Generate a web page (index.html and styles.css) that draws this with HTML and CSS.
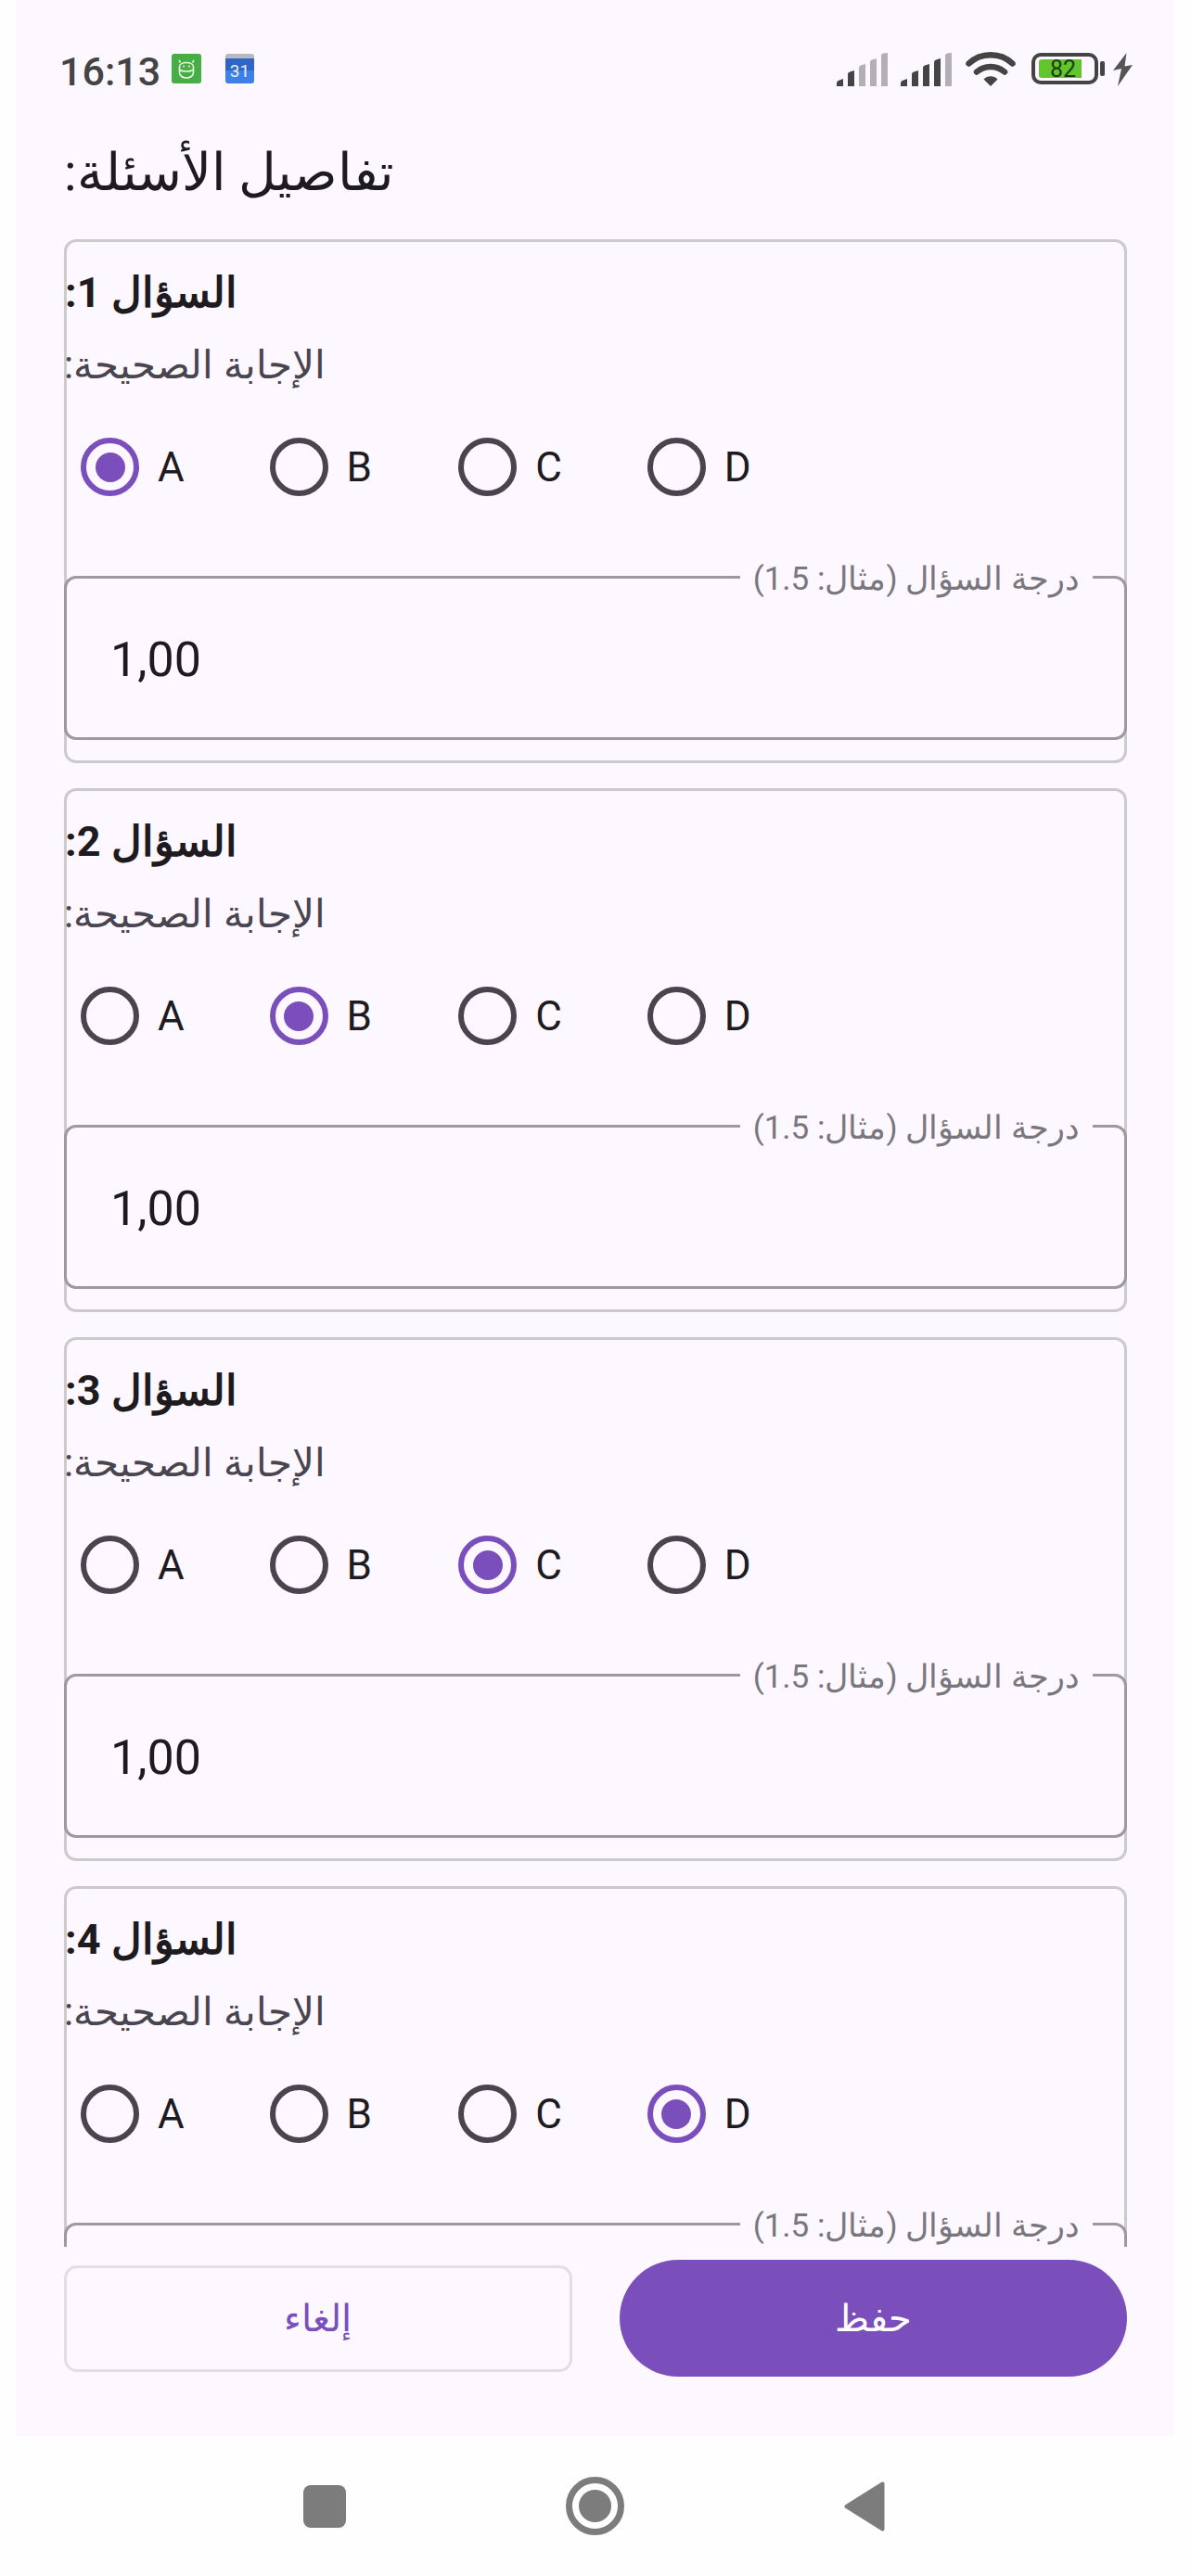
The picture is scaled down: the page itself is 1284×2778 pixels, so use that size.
FILE: index.html
```html
<!DOCTYPE html>
<html lang="ar">
<head>
<meta charset="utf-8">
<title>تفاصيل الأسئلة</title>
<link rel="stylesheet" href="styles.css">
</head>
<body>
<main class="frame">
  <header class="status">
    <div class="status-left">
      <span class="time">16:13</span>
      <svg class="app-icon" viewBox="0 0 32 32" width="32" height="32"><rect width="32" height="32" rx="3" fill="#47ae45"/><g fill="none" stroke="#e9f7e4" stroke-width="1.6"><path d="M9.5 9.5 8 7M22.5 9.5 24 7"/><path d="M8.5 14c0-6 15-6 15 0v6c0 8-15 8-15 0z"/><path d="M8.5 17.5c4 2 11 2 15 0"/></g><circle cx="13" cy="13.5" r="1" fill="#e9f7e4"/><circle cx="19" cy="13.5" r="1" fill="#e9f7e4"/></svg>
      <span class="calendar"><span class="calendar-num">31</span></span>
    </div>
    <div class="status-right">
      <svg class="signal" viewBox="0 0 55 36" width="55" height="36"><g fill="#444"><path d="M0 36v-3q0-3 3-3.600l4-1.400v8z"/><path d="M12 36V23q0-2 2-2.500l5-1.500V36z"/></g><g fill="#b3b0b5"><path d="M24 36V16q0-2 2-2.500l5-1.500V36z"/><path d="M36 36V10q0-2 2-2.500l5-1.500V36z"/><path d="M48 36V3q0-2 2-2.500L55 0V36z"/></g></svg>
      <svg class="signal signal-second" viewBox="0 0 55 36" width="55" height="36"><g fill="#444"><path d="M0 36v-3q0-3 3-3.600l4-1.400v8z"/><path d="M12 36V23q0-2 2-2.500l5-1.500V36z"/><path d="M24 36V16q0-2 2-2.500l5-1.500V36z"/><path d="M36 36V10q0-2 2-2.500l5-1.500V36z"/></g><path fill="#b3b0b5" d="M48 36V3q0-2 2-2.500L55 0V36z"/></svg>
      <svg class="wifi" viewBox="0 0 54 38" width="54" height="38"><g fill="none" stroke="#444" stroke-width="6.500" stroke-linecap="round"><path d="M3.500 13.500C16 1 38 1 50.500 13.500"/><path d="M12 22.500c8-7.500 22-7.500 30 0"/></g><path fill="#444" d="M27 38l-7.500-7.500c3.500-4.500 11.500-4.500 15 0z"/></svg>
      <span class="battery"><span class="battery-fill"></span><span class="battery-num">82</span></span>
      <span class="battery-nub"></span>
      <svg class="bolt" viewBox="0 0 21 36" width="21" height="36"><path fill="#555" d="M14.500 0 0 19l9-2-4 19 16-23-8.500 1.500z"/></svg>
    </div>
  </header>

  <h1 class="heading" dir="rtl">تفاصيل الأسئلة:</h1>

  <section class="scroll">
    <article class="card">
      <h2 class="card-title" dir="rtl">السؤال 1:</h2>
      <p class="card-sub" dir="rtl">الإجابة الصحيحة:</p>
      <div class="radios">
        <div class="radio-item"><span class="radio is-on"></span><span class="radio-label">A</span></div>
        <div class="radio-item"><span class="radio"></span><span class="radio-label">B</span></div>
        <div class="radio-item"><span class="radio"></span><span class="radio-label">C</span></div>
        <div class="radio-item"><span class="radio"></span><span class="radio-label">D</span></div>
      </div>
      <div class="field"><span class="field-label" dir="rtl">درجة السؤال (مثال: 1.5)</span><span class="field-value">1,00</span></div>
    </article>
    <article class="card">
      <h2 class="card-title" dir="rtl">السؤال 2:</h2>
      <p class="card-sub" dir="rtl">الإجابة الصحيحة:</p>
      <div class="radios">
        <div class="radio-item"><span class="radio"></span><span class="radio-label">A</span></div>
        <div class="radio-item"><span class="radio is-on"></span><span class="radio-label">B</span></div>
        <div class="radio-item"><span class="radio"></span><span class="radio-label">C</span></div>
        <div class="radio-item"><span class="radio"></span><span class="radio-label">D</span></div>
      </div>
      <div class="field"><span class="field-label" dir="rtl">درجة السؤال (مثال: 1.5)</span><span class="field-value">1,00</span></div>
    </article>
    <article class="card">
      <h2 class="card-title" dir="rtl">السؤال 3:</h2>
      <p class="card-sub" dir="rtl">الإجابة الصحيحة:</p>
      <div class="radios">
        <div class="radio-item"><span class="radio"></span><span class="radio-label">A</span></div>
        <div class="radio-item"><span class="radio"></span><span class="radio-label">B</span></div>
        <div class="radio-item"><span class="radio is-on"></span><span class="radio-label">C</span></div>
        <div class="radio-item"><span class="radio"></span><span class="radio-label">D</span></div>
      </div>
      <div class="field"><span class="field-label" dir="rtl">درجة السؤال (مثال: 1.5)</span><span class="field-value">1,00</span></div>
    </article>
    <article class="card">
      <h2 class="card-title" dir="rtl">السؤال 4:</h2>
      <p class="card-sub" dir="rtl">الإجابة الصحيحة:</p>
      <div class="radios">
        <div class="radio-item"><span class="radio"></span><span class="radio-label">A</span></div>
        <div class="radio-item"><span class="radio"></span><span class="radio-label">B</span></div>
        <div class="radio-item"><span class="radio"></span><span class="radio-label">C</span></div>
        <div class="radio-item"><span class="radio is-on"></span><span class="radio-label">D</span></div>
      </div>
      <div class="field"><span class="field-label" dir="rtl">درجة السؤال (مثال: 1.5)</span></div>
    </article>
  </section>

  <footer class="actions">
    <button class="btn btn-cancel" type="button">إلغاء</button>
    <button class="btn btn-save" type="button">حفظ</button>
  </footer>
</main>

<nav class="navbar">
  <span class="nav-square"></span>
  <span class="nav-circle"></span>
  <svg class="nav-back" viewBox="0 0 44 54" width="44" height="54"><path fill="#7c7c7c" stroke="#7c7c7c" stroke-width="4" stroke-linejoin="round" d="M2.500 27 41.500 2.500v49z"/></svg>
</nav>
</body>
</html>
```

FILE: styles.css
```css
* { box-sizing: border-box; }

html, body {
  margin: 0;
  padding: 0;
}

body {
  width: 1284px;
  height: 2778px;
  overflow: hidden;
  background: #fefefe;
  font-family: Roboto, serif;
  color: #1d1b20;
  display: flex;
  flex-direction: column;
}

.frame {
  height: 2627px;
  margin: 0 18px 0 17px;
  padding: 0 51px 0 52px;
  background: #fdf7ff;
  display: flex;
  flex-direction: column;
}

/* status bar */
.status {
  height: 128px;
  padding-top: 56px;
  margin: 0 -6px 0 -4px;
  display: flex;
  justify-content: space-between;
  align-items: flex-start;
  flex: none;
}

.status-left { display: flex; align-items: flex-start; }

.time {
  font-size: 43px;
  font-weight: 500;
  line-height: 42px;
  color: #444;
  width: 120px;
  margin-left: -1px;
  margin-right: 1px;
}

.app-icon { margin-top: 2px; }

.calendar {
  width: 31px;
  height: 32px;
  margin: 2px 0 0 26px;
  border-radius: 3px;
  background: linear-gradient(#b9b9bd 0 5px, #2f64c8 5px 18px, #3d80e6 18px);
  display: flex;
  align-items: center;
  justify-content: center;
}

.calendar-num {
  font-size: 19px;
  color: #eaf1fd;
  margin-top: 5px;
}

.status-right { display: flex; align-items: flex-start; }

.signal { margin-top: 1px; }
.signal-second { margin-left: 14px; }
.wifi { margin: -1px 0 0 15px; }

.battery {
  position: relative;
  width: 72px;
  height: 34px;
  margin: 1px 0 0 17px;
  border: 4px solid #444;
  border-radius: 10px;
  padding: 3px 4px;
}

.battery-fill {
  display: block;
  width: 46px;
  height: 20px;
  border-radius: 3px 0 0 3px;
  background: #62c52d;
}

.battery-num {
  position: absolute;
  left: 16px;
  top: 1px;
  font-size: 25px;
  line-height: 25px;
  color: #1e3a12;
}

.battery-nub {
  width: 5px;
  height: 16px;
  margin: 10px 0 0 2px;
  border-radius: 2px;
  background: #444;
}

.bolt { margin: 1px 0 0 9px; }

/* heading */
.heading {
  flex: none;
  height: 130px;
  margin: 0;
  font-size: 56px;
  font-weight: 400;
  line-height: 116px;
  text-align: left;
  color: #1d1b20;
}

/* scrolling list */
.scroll {
  flex: 1;
  min-height: 0;
  overflow: hidden;
  display: flex;
  flex-direction: column;
  gap: 27px;
}

.card {
  flex: none;
  height: 565px;
  border: 3px solid #cbcbcb;
  border-radius: 13px;
}

.card-title {
  margin: 24px 0 0 -2px;
  font-size: 45px;
  font-weight: 700;
  line-height: 62px;
  text-align: left;
}

.card-sub {
  margin: 17px 0 0 -3px;
  font-size: 42px;
  font-weight: 400;
  line-height: 60px;
  text-align: left;
  color: #49454f;
}

.radios {
  display: flex;
  margin-top: 48px;
  padding-left: 15px;
}

.radio-item {
  width: 203.600px;
  display: flex;
  align-items: center;
  gap: 20px;
}

.radio {
  width: 63px;
  height: 63px;
  border: 6px solid #49454f;
  border-radius: 50%;
  display: flex;
  align-items: center;
  justify-content: center;
}

.radio.is-on { border-color: #7b4fbb; }

.radio.is-on::after {
  content: "";
  width: 32px;
  height: 32px;
  border-radius: 50%;
  background: #7b4fbb;
}

.radio-label {
  font-size: 44px;
  line-height: 52px;
}

.field {
  position: relative;
  height: 177px;
  margin: 86px -3px 0;
  padding: 4px 0 0 47px;
  border: 3px solid #9c9a9e;
  border-radius: 13px;
  display: flex;
  align-items: center;
}

.field-value {
  font-size: 52px;
  line-height: 60px;
}

.field-label {
  position: absolute;
  top: -22px;
  right: 34px;
  padding: 0 14px;
  height: 44px;
  background: #fdf7ff;
  font-size: 35px;
  line-height: 46px;
  color: #79767d;
}

/* action buttons */
.actions {
  flex: none;
  height: 204px;
  padding-top: 14px;
  display: grid;
  grid-template-columns: 1fr 1fr;
  column-gap: 51px;
  align-items: start;
}

.btn {
  font-family: inherit;
  font-size: 40px;
  padding: 0;
}

.btn-cancel {
  height: 115px;
  margin-top: 6px;
  background: transparent;
  border: 3px solid #e3dde6;
  border-radius: 14px;
  color: #7b4fbb;
}

.btn-save {
  height: 126px;
  background: #7b4fbb;
  border: 0;
  border-radius: 63px;
  color: #fff;
}

/* system navigation */
.navbar {
  flex: 1;
  position: relative;
}

.nav-square {
  position: absolute;
  left: 327px;
  top: 53px;
  width: 46px;
  height: 46px;
  border-radius: 8px;
  background: #7c7c7c;
}

.nav-circle {
  position: absolute;
  left: 610px;
  top: 44px;
  width: 63px;
  height: 63px;
  border: 7px solid #7c7c7c;
  border-radius: 50%;
  background: radial-gradient(circle, #7c7c7c 0 17px, transparent 18px);
}

.nav-back {
  position: absolute;
  left: 910px;
  top: 49px;
}
```
